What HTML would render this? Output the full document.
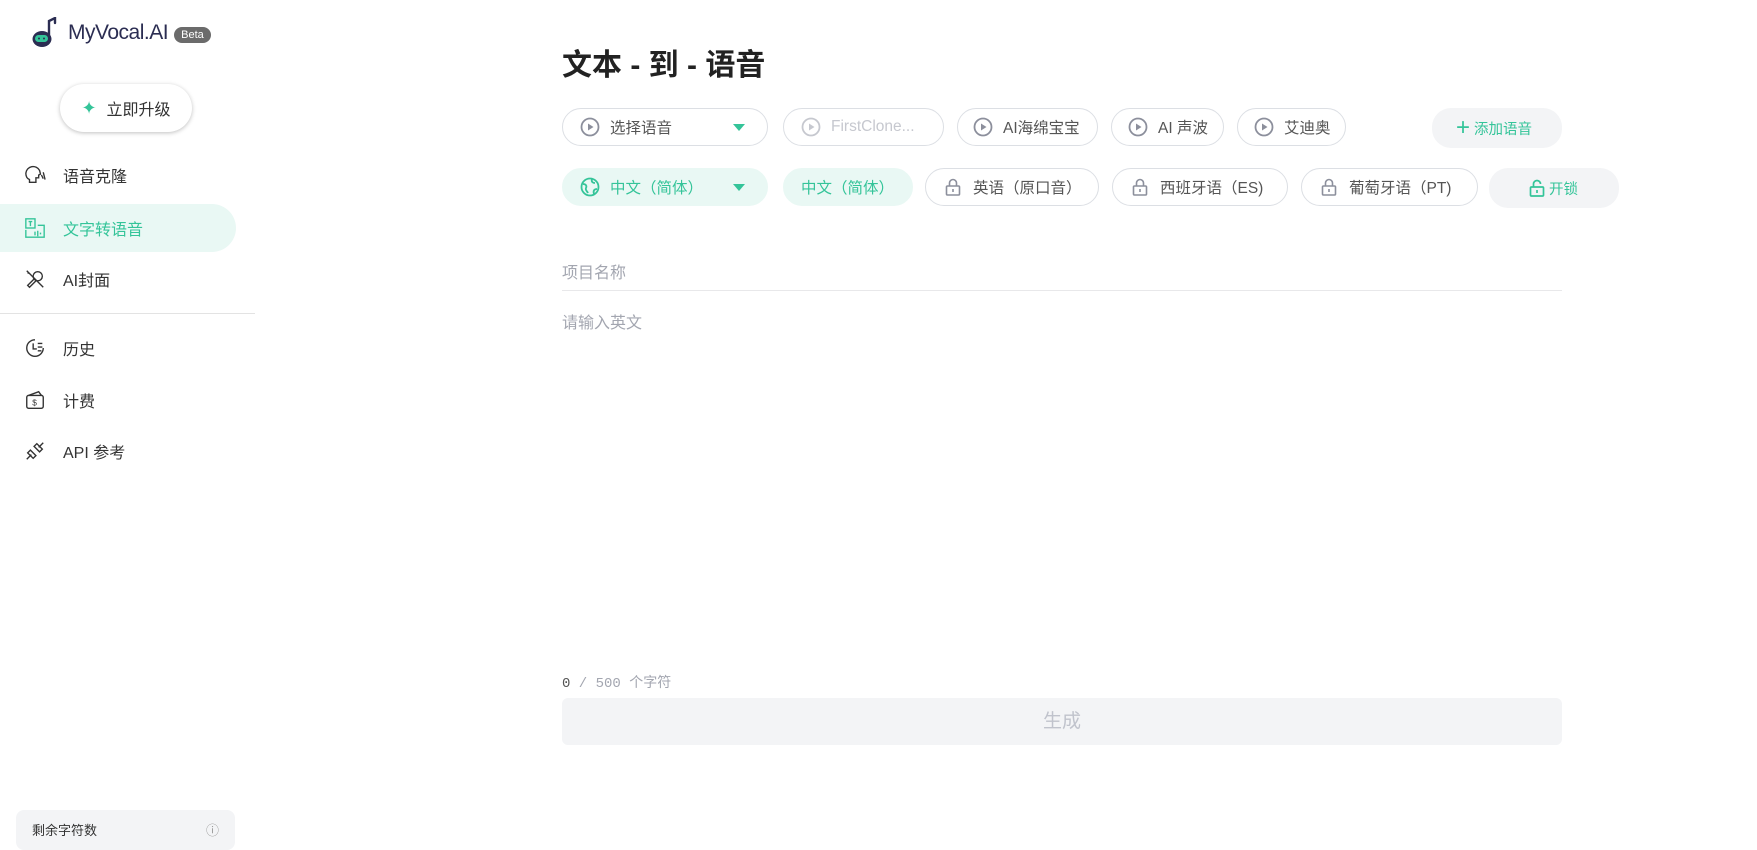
<!DOCTYPE html>
<html><head><meta charset="utf-8"><style>
*{box-sizing:border-box;margin:0;padding:0}
body{width:1757px;height:833px;overflow:hidden;background:#fff;font-family:"Liberation Sans","Noto Sans CJK SC",sans-serif;color:#333;position:relative}
.a{position:absolute}
.nav{position:absolute;left:0;width:236px;height:48px;display:flex;align-items:center;padding-left:24px;font-size:16px;color:#333}
.nav svg{width:22px;height:22px;margin-right:17px}
.nav.act{background:#e9f8f4;border-radius:0 24px 24px 0;color:#34c499}
.pill{position:absolute;height:38px;border:1px solid #dcdfe4;border-radius:19px;display:flex;align-items:center;padding-left:17px;font-size:15.5px;color:#555}
.pill svg{width:20px;height:20px;margin-right:10px}
.g{background:#e9f8f4;border-color:#e9f8f4;color:#34c499}
.tri{position:absolute;right:22px;top:15px;width:0;height:0;border-left:6px solid transparent;border-right:6px solid transparent;border-top:7px solid #34c499}
</style></head><body>
<svg class="a" style="left:30px;top:17px" width="30" height="32" viewBox="0 0 30 32"><path d="M19 22V4l6-3v5" stroke="#2b2d52" stroke-width="2.4" fill="none" stroke-linecap="round"/><ellipse cx="12" cy="22" rx="9.5" ry="8" fill="#2b2d52"/><rect x="5" y="18" width="13" height="7" rx="3.5" fill="#34c499"/><circle cx="9" cy="21.5" r="1" fill="#2b2d52"/><circle cx="14" cy="21.5" r="1" fill="#2b2d52"/></svg>
<div class="a" style="left:68px;top:21px;font-size:21px;color:#2b2d52;letter-spacing:-0.5px">MyVocal.AI</div>
<div class="a" style="left:174px;top:27px;width:37px;height:16px;border-radius:8px;background:#6b6b6b;color:#fff;font-size:11px;text-align:center;line-height:16px">Beta</div>
<div class="a" style="left:60px;top:84px;width:132px;height:48px;border-radius:24px;background:#fff;box-shadow:0 1px 4px rgba(0,0,0,.25);display:flex;align-items:center;justify-content:center;font-size:16px;color:#333"><span style="color:#34c499;font-size:18px;margin-right:10px">✦</span>立即升级</div>
<div class="nav" style="top:151px"><svg viewBox="0 0 24 24" fill="none" stroke="#333" stroke-width="1.5"><path d="M6 20v-3c-3-1-4-4-4-7a8 8 0 0 1 15-3l1 4-2 1v3h-3v5z"/><path d="M19 12l2 4M21 9l2 8"/></svg>语音克隆</div>
<div class="nav act" style="top:204px"><svg viewBox="0 0 24 24" fill="none" stroke="#34c499" stroke-width="1.5"><rect x="2" y="2" width="10" height="10"/><path d="M5 5h4M7 5v5M2 14v8h20V9h-7M12 16v4M15 15v6M18 17v2"/></svg>文字转语音</div>
<div class="nav" style="top:255px"><svg viewBox="0 0 24 24" fill="none" stroke="#333" stroke-width="1.5"><circle cx="15" cy="9" r="5"/><path d="M11 12l-7 7 2 2 7-7M3 3l18 18M4 6l1-1"/></svg>AI封面</div>
<div class="a" style="left:0;top:313px;width:255px;height:1px;background:#e3e3e3"></div>
<div class="nav" style="top:324px"><svg viewBox="0 0 24 24" fill="none" stroke="#333" stroke-width="1.5"><path d="M21 12a9 9 0 1 1-9-9"/><path d="M10 7v6h4M15 7h5M15 11h5M15 15h4"/></svg>历史</div>
<div class="nav" style="top:376px"><svg viewBox="0 0 24 24" fill="none" stroke="#333" stroke-width="1.5"><rect x="3" y="7" width="18" height="14" rx="2"/><path d="M5 7l11-4 3 4"/><text x="9" y="18" font-size="9" fill="#333" stroke="none">$</text></svg>计费</div>
<div class="nav" style="top:427px"><svg viewBox="0 0 24 24" fill="none" stroke="#333" stroke-width="1.5"><path d="M3 21l5-5M16 8l5-5M7 11l6 6-3 3-6-6zM11 7l6 6 3-3-6-6z"/></svg>API 参考</div>
<div class="a" style="left:16px;top:810px;width:219px;height:40px;border-radius:8px;background:#f3f4f6;padding:10px 16px;font-size:13px;color:#333">剩余字符数<span style="float:right;color:#999">ⓘ</span></div>
<div class="a" style="left:562px;top:40px;font-size:30px;font-weight:bold;color:#222">文本 - 到 - 语音</div>
<div class="pill" style="left:562px;top:108px;width:206px"><svg viewBox="0 0 20 20"><circle cx="10" cy="10" r="8.5" fill="none" stroke="#8c8f9c" stroke-width="1.8"/><path d="M8 6.5v7l5.5-3.5z" fill="#8c8f9c"/></svg>选择语音<span class="tri"></span></div>
<div class="pill" style="left:783px;top:108px;width:161px;color:#c6c8cf"><svg viewBox="0 0 20 20"><circle cx="10" cy="10" r="8.5" fill="none" stroke="#c6c8cf" stroke-width="1.8"/><path d="M8 6.5v7l5.5-3.5z" fill="#c6c8cf"/></svg>FirstClone...</div>
<div class="pill" style="left:957px;top:108px;width:141px;padding-left:15px"><svg viewBox="0 0 20 20"><circle cx="10" cy="10" r="8.5" fill="none" stroke="#8c8f9c" stroke-width="1.8"/><path d="M8 6.5v7l5.5-3.5z" fill="#8c8f9c"/></svg>AI海绵宝宝</div>
<div class="pill" style="left:1111px;top:108px;width:113px;padding-left:16px"><svg viewBox="0 0 20 20"><circle cx="10" cy="10" r="8.5" fill="none" stroke="#8c8f9c" stroke-width="1.8"/><path d="M8 6.5v7l5.5-3.5z" fill="#8c8f9c"/></svg>AI 声波</div>
<div class="pill" style="left:1237px;top:108px;width:109px;padding-left:16px"><svg viewBox="0 0 20 20"><circle cx="10" cy="10" r="8.5" fill="none" stroke="#8c8f9c" stroke-width="1.8"/><path d="M8 6.5v7l5.5-3.5z" fill="#8c8f9c"/></svg>艾迪奥</div>
<div class="pill" style="left:1432px;top:108px;width:130px;height:40px;border:none;background:#f3f4f6;color:#34c499;font-size:14.5px;padding-left:24px"><span style="font-size:24px;margin-right:4px;font-weight:300">+</span>添加语音</div>
<div class="pill g" style="left:562px;top:168px;width:206px"><svg viewBox="0 0 20 20" fill="none" stroke="#34c499" stroke-width="1.8"><circle cx="10" cy="10" r="8.5"/><path d="M3 7c3 0 4 2 3 4s1 3 2 5M12 2c-1 3 1 4 3 4M17 12c-3 0-4 2-3 5"/></svg>中文（简体）<span class="tri"></span></div>
<div class="pill g" style="left:783px;top:168px;width:130px">中文（简体）</div>
<div class="pill" style="left:925px;top:168px;width:174px"><svg viewBox="0 0 20 20" fill="none" stroke="#8c8f9c" stroke-width="1.6"><rect x="3.5" y="9" width="13" height="9" rx="1"/><path d="M6.5 9V6a3.5 3.5 0 0 1 7 0v3M10 12v3"/></svg>英语（原口音）</div>
<div class="pill" style="left:1112px;top:168px;width:176px"><svg viewBox="0 0 20 20" fill="none" stroke="#8c8f9c" stroke-width="1.6"><rect x="3.5" y="9" width="13" height="9" rx="1"/><path d="M6.5 9V6a3.5 3.5 0 0 1 7 0v3M10 12v3"/></svg>西班牙语（ES)</div>
<div class="pill" style="left:1301px;top:168px;width:177px"><svg viewBox="0 0 20 20" fill="none" stroke="#8c8f9c" stroke-width="1.6"><rect x="3.5" y="9" width="13" height="9" rx="1"/><path d="M6.5 9V6a3.5 3.5 0 0 1 7 0v3M10 12v3"/></svg>葡萄牙语（PT)</div>
<div class="pill" style="left:1489px;top:168px;width:130px;height:40px;border:none;background:#f3f4f6;color:#34c499;font-size:14.5px;padding-left:38px"><svg viewBox="0 0 20 20" fill="none" stroke="#34c499" stroke-width="1.7" style="margin-right:2px"><rect x="3.5" y="9" width="13" height="9" rx="1"/><path d="M6.5 9V6a3.5 3.5 0 0 1 7 0M10 12v3"/></svg>开锁</div>
<div class="a" style="left:562px;top:259px;font-size:16px;color:#a3a6b0">项目名称</div>
<div class="a" style="left:562px;top:290px;width:1000px;height:1px;background:#e8e8ea"></div>
<div class="a" style="left:562px;top:309px;font-size:16px;color:#a3a6b0">请输入英文</div>
<div class="a" style="left:562px;top:672px;font-size:14px;color:#a3a6b0;font-family:'Liberation Mono','Noto Sans CJK SC',monospace"><span style="color:#555">0</span> / 500 <span style="font-family:'Liberation Sans','Noto Sans CJK SC',sans-serif">个字符</span></div>
<div class="a" style="left:562px;top:698px;width:1000px;height:47px;border-radius:6px;background:#f3f4f6;text-align:center;line-height:47px;font-size:19px;color:#c0c3cc">生成</div>
</body></html>
